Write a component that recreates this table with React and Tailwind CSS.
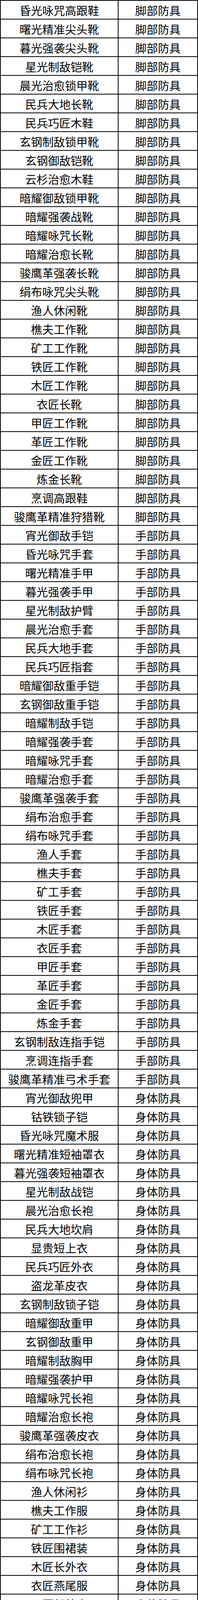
const groups = [
  {
    type: '脚部防具',
    items: [
      '昏光咏咒高跟鞋', '曙光精准尖头靴', '暮光强袭尖头靴', '星光制敌铠靴', '晨光治愈锁甲靴',
      '民兵大地长靴', '民兵巧匠木鞋', '玄钢制敌锁甲靴', '玄钢御敌铠靴', '云杉治愈木鞋',
      '暗耀御敌锁甲靴', '暗耀强袭战靴', '暗耀咏咒长靴', '暗耀治愈长靴', '骏鹰革强袭长靴',
      '绢布咏咒尖头靴', '渔人休闲靴', '樵夫工作靴', '矿工工作靴', '铁匠工作靴',
      '木匠工作靴', '衣匠长靴', '甲匠工作靴', '革匠工作靴', '金匠工作靴',
      '炼金长靴', '烹调高跟鞋', '骏鹰革精准狩猎靴',
    ],
  },
  {
    type: '手部防具',
    items: [
      '宵光御敌手铠', '昏光咏咒手套', '曙光精准手甲', '暮光强袭手甲', '星光制敌护臂',
      '晨光治愈手套', '民兵大地手套', '民兵巧匠指套', '暗耀御敌重手铠', '玄钢御敌重手铠',
      '暗耀制敌手铠', '暗耀强袭手套', '暗耀咏咒手套', '暗耀治愈手套', '骏鹰革强袭手套',
      '绢布治愈手套', '绢布咏咒手套', '渔人手套', '樵夫手套', '矿工手套',
      '铁匠手套', '木匠手套', '衣匠手套', '甲匠手套', '革匠手套',
      '金匠手套', '炼金手套', '玄钢制敌连指手铠', '烹调连指手套', '骏鹰革精准弓术手套',
    ],
  },
  {
    type: '身体防具',
    items: [
      '宵光御敌兜甲', '钴铁锁子铠', '昏光咏咒魔术服', '曙光精准短袖罩衣', '暮光强袭短袖罩衣',
      '星光制敌战铠', '晨光治愈长袍', '民兵大地坎肩', '显贵短上衣', '民兵巧匠外衣',
      '盗龙革皮衣', '玄钢制敌锁子铠', '暗耀御敌重甲', '玄钢御敌重甲', '暗耀制敌胸甲',
      '暗耀强袭护甲', '暗耀咏咒长袍', '暗耀治愈长袍', '骏鹰革强袭皮衣', '绢布治愈长袍',
      '绢布咏咒长袍', '渔人休闲衫', '樵夫工作服', '矿工工作衫', '铁匠围裙装',
      '木匠长外衣', '衣匠燕尾服', '甲匠长外衣', '革匠工作衫', '金匠工作服',
      '炼金大衣', '烹调围裙装', '骏鹰革精准束腰衣',
    ],
  },
  {
    type: '腿部防具',
    items: [
      '宵光御敌短裤', '昏光咏咒紧身裤', '曙光精准衬裤', '暮光强袭衬裤', '星光制敌骑兵裤',
      '晨光治愈马裤', '显贵打底裤', '民兵大地裤袜', '民兵巧匠裤袜', '暗耀制敌软甲裤',
      '绢布制敌软甲裤', '绢布咏咒马裤', '绢布治愈马裤', '暗耀御敌重足铠', '玄钢御敌重足铠',
      '暗耀咏咒马裤', '暗耀治愈马裤', '骏鹰革强袭软甲裤', '渔人休闲裤', '樵夫工作裤',
      '矿工工作裤', '铁匠工作裤', '木匠工作裤', '衣匠软甲裤', '甲匠工作裤',
      '革匠软甲裤', '金匠软甲裤', '炼金软裤', '暗耀强袭三角裤', '烹调工作裤',
      '骏鹰革精准腿套',
    ],
  },
  {
    type: '头部防具',
    items: [
      '宵光御敌头冠', '昏光咏咒魔术帽', '曙光精准兜帽', '暮光强袭兜帽', '星光制敌盔帽',
      '显贵无檐帽', '民兵大地兜帽', '玄钢制敌锁甲头罩', '骏鹰革强袭头巾', '玄钢御敌战盔',
      '暗耀御敌头盔', '暗耀强袭眼罩', '绢布治愈宽边帽', '绢布咏咒宽边帽', '渔人休闲帽',
      '樵夫尖角帽', '矿工头灯帽', '铁匠护镜帽', '木匠头巾帽', '衣匠高礼帽',
      '甲匠遮面罩', '革匠工作帽', '金匠包头巾', '炼金单眼镜', '烹调高厨帽',
      '骏鹰革精准狩猎帽',
    ],
  },
];

const rows = groups.flatMap(g => g.items.map(name => ({ name, type: g.type })));

export default function App() {
  return (
    <div className="w-[506px] bg-white text-black pb-[4px]" style={{ fontFamily: '"Noto Sans CJK SC", "Noto Sans", sans-serif' }}>
      <div className="grid grid-cols-[303px_1fr] auto-rows-[48px] border-t-2 border-black">
        {rows.map((r, i) => (
          <div key={i} className="contents">
            <div className="flex items-center justify-center whitespace-nowrap overflow-hidden border-b-2 border-l-2 border-r-2 border-black text-[29px] leading-none pt-[3px]">
              {r.name}
            </div>
            <div className="flex items-center justify-center whitespace-nowrap overflow-hidden border-b-2 border-r-2 border-black text-[29px] leading-none pt-[3px]">
              {r.type}
            </div>
          </div>
        ))}
      </div>
    </div>
  );
}
